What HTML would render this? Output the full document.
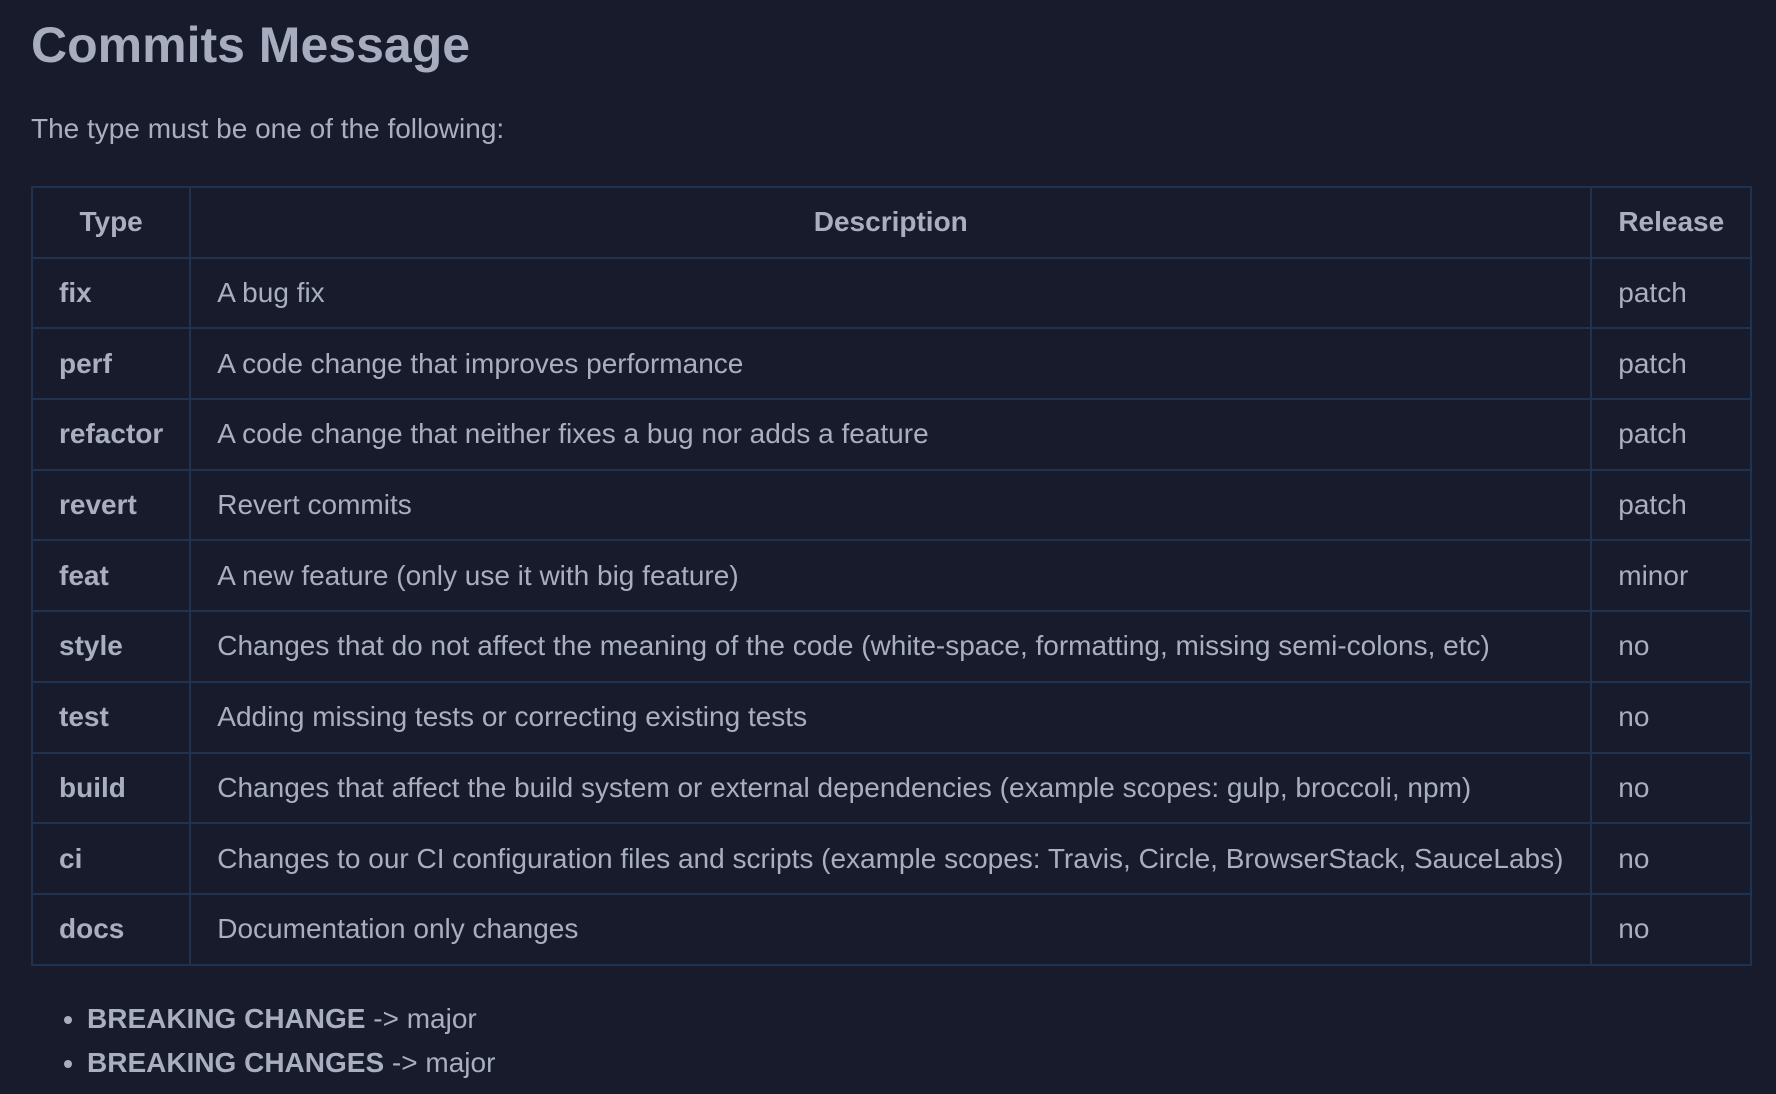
<!DOCTYPE html>
<html><head><meta charset="utf-8"><style>
html,body{margin:0;padding:0;background:#171b2b;width:1776px;height:1094px;overflow:hidden}
body{font-family:"Liberation Sans",Arial,sans-serif;color:#a9afc0}
h1{position:absolute;left:31px;top:15px;margin:0;font-size:50px;font-weight:bold;color:#a7adbf;line-height:60px}
p{position:absolute;left:31px;top:112px;margin:0;font-size:28px;line-height:34px}
table{position:absolute;left:31px;top:186px;border-collapse:collapse;font-size:28px}
td,th{border:2px solid #1f3350;height:68.7px;padding:0 26px;text-align:left;white-space:nowrap}
th{font-weight:bold;text-align:center}
td:first-child{font-weight:bold}
ul{position:absolute;left:31px;top:997px;margin:0;padding-left:56px;font-size:28px;line-height:44px}
b{font-weight:bold}
</style></head><body>
<h1>Commits Message</h1>
<p>The type must be one of the following:</p>
<table>
<colgroup><col style="width:157px"><col style="width:1401px"><col style="width:160px"></colgroup>
<tr><th>Type</th><th>Description</th><th>Release</th></tr>
<tr><td>fix</td><td>A bug fix</td><td>patch</td></tr>
<tr><td>perf</td><td>A code change that improves performance</td><td>patch</td></tr>
<tr><td>refactor</td><td>A code change that neither fixes a bug nor adds a feature</td><td>patch</td></tr>
<tr><td>revert</td><td>Revert commits</td><td>patch</td></tr>
<tr><td>feat</td><td>A new feature (only use it with big feature)</td><td>minor</td></tr>
<tr><td>style</td><td>Changes that do not affect the meaning of the code (white-space, formatting, missing semi-colons, etc)</td><td>no</td></tr>
<tr><td>test</td><td>Adding missing tests or correcting existing tests</td><td>no</td></tr>
<tr><td>build</td><td>Changes that affect the build system or external dependencies (example scopes: gulp, broccoli, npm)</td><td>no</td></tr>
<tr><td>ci</td><td>Changes to our CI configuration files and scripts (example scopes: Travis, Circle, BrowserStack, SauceLabs)</td><td>no</td></tr>
<tr><td>docs</td><td>Documentation only changes</td><td>no</td></tr>
</table>
<ul><li><b>BREAKING CHANGE</b> -&gt; major</li><li><b>BREAKING CHANGES</b> -&gt; major</li></ul>
</body></html>
